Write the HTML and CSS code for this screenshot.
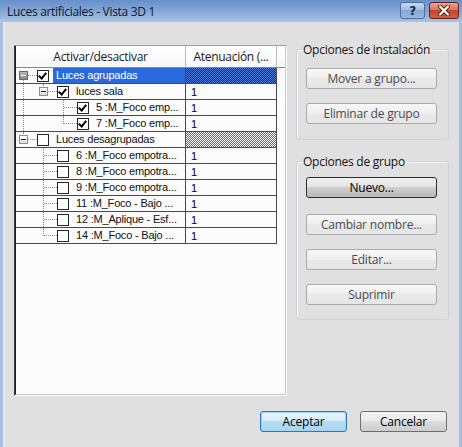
FILE: index.html
```html
<!DOCTYPE html>
<html lang="es">
<head>
    <meta charset="UTF-8">
    <title>Luces artificiales - Vista 3D 1</title>
    <link rel="stylesheet" href="styles.css">
</head>
<body>
    <div class="titlebar">
        <span class="title">Luces artificiales - Vista 3D 1</span>
        <div class="caption-btns">
            <span class="cap-btn help">?</span>
            <span class="cap-btn close">
                <svg width="14" height="11" viewBox="0 0 14 11">
                    <path d="M3 1.5 L11 9.5 M11 1.5 L3 9.5" stroke="#5a1a10" stroke-width="4" stroke-linecap="round"/>
                    <path d="M3 1.5 L11 9.5 M11 1.5 L3 9.5" stroke="#fff" stroke-width="2.2" stroke-linecap="round"/>
                </svg>
            </span>
        </div>
    </div>

    <div class="client">
        <div class="content">
            <div class="tree-grid">
                <div class="grid-inner">
                    <div class="grid-head">
                        <div class="hcell c1">Activar/desactivar</div>
                        <div class="hcell c2">Atenuación (...</div>
                    </div>

                    <!-- grupo: Luces agrupadas -->
                    <div class="grid-row">
                        <div class="cell c1">
                            <span class="node first parent"><span class="exp hot"></span></span>
                            <span class="cb on"></span>
                            <span class="label selected">Luces agrupadas</span>
                        </div>
                        <div class="cell c2 hatch-blue"></div>
                    </div>
                    <div class="grid-row">
                        <div class="cell c1">
                            <span class="indent pipe"></span>
                            <span class="node last parent"><span class="exp"></span></span>
                            <span class="cb on"></span>
                            <span class="label">luces sala</span>
                        </div>
                        <div class="cell c2">1</div>
                    </div>
                    <div class="grid-row">
                        <div class="cell c1">
                            <span class="indent pipe"></span>
                            <span class="indent"></span>
                            <span class="node"></span>
                            <span class="cb on"></span>
                            <span class="label">5 :M_Foco emp...</span>
                        </div>
                        <div class="cell c2">1</div>
                    </div>
                    <div class="grid-row">
                        <div class="cell c1">
                            <span class="indent pipe"></span>
                            <span class="indent"></span>
                            <span class="node last"></span>
                            <span class="cb on"></span>
                            <span class="label">7 :M_Foco emp...</span>
                        </div>
                        <div class="cell c2">1</div>
                    </div>

                    <!-- grupo: Luces desagrupadas -->
                    <div class="grid-row">
                        <div class="cell c1">
                            <span class="node last parent"><span class="exp"></span></span>
                            <span class="cb"></span>
                            <span class="label">Luces desagrupadas</span>
                        </div>
                        <div class="cell c2 hatch-gray"></div>
                    </div>
                    <div class="grid-row">
                        <div class="cell c1">
                            <span class="indent"></span>
                            <span class="node"></span>
                            <span class="cb"></span>
                            <span class="label">6 :M_Foco empotra...</span>
                        </div>
                        <div class="cell c2">1</div>
                    </div>
                    <div class="grid-row">
                        <div class="cell c1">
                            <span class="indent"></span>
                            <span class="node"></span>
                            <span class="cb"></span>
                            <span class="label">8 :M_Foco empotra...</span>
                        </div>
                        <div class="cell c2">1</div>
                    </div>
                    <div class="grid-row">
                        <div class="cell c1">
                            <span class="indent"></span>
                            <span class="node"></span>
                            <span class="cb"></span>
                            <span class="label">9 :M_Foco empotra...</span>
                        </div>
                        <div class="cell c2">1</div>
                    </div>
                    <div class="grid-row">
                        <div class="cell c1">
                            <span class="indent"></span>
                            <span class="node"></span>
                            <span class="cb"></span>
                            <span class="label">11 :M_Foco - Bajo ...</span>
                        </div>
                        <div class="cell c2">1</div>
                    </div>
                    <div class="grid-row">
                        <div class="cell c1">
                            <span class="indent"></span>
                            <span class="node"></span>
                            <span class="cb"></span>
                            <span class="label">12 :M_Aplique - Esf...</span>
                        </div>
                        <div class="cell c2">1</div>
                    </div>
                    <div class="grid-row">
                        <div class="cell c1">
                            <span class="indent"></span>
                            <span class="node last"></span>
                            <span class="cb"></span>
                            <span class="label">14 :M_Foco - Bajo ...</span>
                        </div>
                        <div class="cell c2">1</div>
                    </div>
                </div>
            </div>

            <div class="side">
                <fieldset class="group install">
                    <legend>Opciones de instalación</legend>
                    <button class="btn off">Mover a grupo...</button>
                    <button class="btn off">Eliminar de grupo</button>
                </fieldset>
                <fieldset class="group groups">
                    <legend>Opciones de grupo</legend>
                    <button class="btn focus">Nuevo...</button>
                    <button class="btn off">Cambiar nombre...</button>
                    <button class="btn off">Editar...</button>
                    <button class="btn off">Suprimir</button>
                </fieldset>
            </div>
        </div>

        <div class="footer">
            <button class="btn default">Aceptar</button>
            <button class="btn">Cancelar</button>
        </div>
    </div>
</body>
</html>
```

FILE: styles.css
```css
body {
    margin: 0;
    width: 462px;
    height: 447px;
    overflow: hidden;
    display: flex;
    flex-direction: column;
    background: #a4c0e2;
    font-family: 'Open Sans', 'Noto Sans', sans-serif;
    font-size: 12px;
    letter-spacing: -0.25px;
    color: #000;
}

/* caption bar */
.titlebar {
    height: 22px;
    flex: none;
    display: flex;
    align-items: center;
    justify-content: space-between;
    padding: 0 3px 0 7px;
    background: linear-gradient(#6690c8, #86a9d7 55%, #a9c5e6);
}

.title {
    color: #10182a;
    font-size: 12px;
    letter-spacing: -0.3px;
}

.caption-btns {
    display: flex;
    gap: 4px;
    align-self: flex-start;
    margin-top: 2px;
}

.cap-btn {
    height: 15px;
    display: flex;
    align-items: center;
    justify-content: center;
    border-radius: 3px;
}

.cap-btn.help {
    width: 23px;
    border: 1px solid #4d6f9c;
    background: linear-gradient(#c6d9ef, #9dbbe0 50%, #85a8d4 50%, #9ab8de);
    color: #15264a;
    font-family: 'DejaVu Sans', sans-serif;
    font-weight: bold;
    font-size: 12px;
}

.cap-btn.close {
    width: 28px;
    border: 1px solid #6e2216;
    background: linear-gradient(#e8a597, #d5705d 50%, #c2442e 50%, #d0604a);
}

/* window body */
.client {
    flex: 1;
    margin: 0 3px;
    padding: 23px 10px 0 11px;
    background: #e0e0e0;
    box-shadow: inset 1px 0 #e9e4de, inset 3px 0 #e6e2dd;
}

.content {
    display: flex;
    gap: 9px;
    align-items: flex-start;
}

/* tree grid */
.tree-grid {
    width: 273px;
    height: 351px;
    box-sizing: border-box;
    border: 1px solid;
    border-color: #a0a0a0 #ffffff #ffffff #3a3a3a;
    background: #fbfbfb;
}

.grid-inner {
    height: 100%;
    box-sizing: border-box;
    border: 1px solid;
    border-color: #ffffff #c8c8c8 #c8c8c8 #1e1e1e;
    border-top: 0;
    font-family: 'Liberation Sans', Arial, sans-serif;
    font-size: 11px;
    letter-spacing: -0.2px;
}

.grid-head {
    display: flex;
    height: 21px;
    border-bottom: 1px solid #8a8a8a;
    background: linear-gradient(#ffffff, #f6f7f9);
    font-family: 'Open Sans', sans-serif;
    font-size: 12px;
    letter-spacing: -0.3px;
}

.hcell {
    display: flex;
    align-items: center;
    justify-content: center;
    border-right: 1px solid #b8b8b8;
    color: #1a1a1a;
}

.c1 {
    width: 169px;
}

.c2 {
    width: 90px;
}

.grid-row {
    display: flex;
    height: 16px;
}

.cell {
    box-sizing: border-box;
    height: 16px;
    border-bottom: 1px solid #4a4a4a;
    border-right: 1px solid #4a4a4a;
    display: flex;
    align-items: center;
}

.cell.c1 {
    width: 170px;
}

.cell.c2 {
    width: 91px;
    padding-left: 5px;
}

.hatch-blue {
    background: repeating-conic-gradient(#0f2f7e 0 25%, #4c7cdb 0 50%) 0 0 / 2px 2px;
}

.hatch-gray {
    background: repeating-conic-gradient(#6e6e6e 0 25%, #f4f4f4 0 50%) 0 0 / 2px 2px;
}

/* tree connectors */
.indent,
.node {
    position: relative;
    width: 20px;
    height: 100%;
    flex: none;
}

.indent.pipe::before,
.node::before {
    content: "";
    position: absolute;
    left: 7px;
    top: 0;
    bottom: 0;
    border-left: 1px dotted #8c8c8c;
}

.node.first::before {
    top: 50%;
}

.node.last::before {
    bottom: 50%;
}

.node::after {
    content: "";
    position: absolute;
    left: 8px;
    right: -1px;
    top: 7px;
    border-top: 1px dotted #8c8c8c;
}

.exp {
    position: absolute;
    z-index: 1;
    left: 3px;
    top: 3px;
    width: 7px;
    height: 7px;
    border: 1px solid #8e8f8f;
    background: linear-gradient(#ffffff, #dcdcdc);
}

.exp::after {
    content: "";
    position: absolute;
    left: 1px;
    top: 3px;
    width: 5px;
    height: 1px;
    background: #222;
}

.exp.hot {
    background: linear-gradient(#b8b8b8, #8a8a8a);
    border-color: #6c6c6c;
}

.exp.hot::after {
    background: #fff;
}

/* check boxes */
.cb {
    position: relative;
    flex: none;
    width: 10px;
    height: 10px;
    margin-left: 1px;
    border: 1px solid #262626;
    background: #fff;
}

.cb.on::after {
    content: "";
    position: absolute;
    left: 2px;
    top: 0;
    width: 3px;
    height: 6px;
    border-right: 2px solid #000;
    border-bottom: 2px solid #000;
    transform: rotate(40deg);
}

.label {
    margin-left: 4px;
    padding-left: 3px;
    line-height: 15px;
    white-space: nowrap;
    color: #111;
}

.label.selected {
    flex: 1;
    align-self: stretch;
    background: #2a69dc;
    color: #fff;
}

/* option groups */
.side {
    width: 153px;
    display: flex;
    flex-direction: column;
    gap: 14px;
    margin-top: -3px;
}

.group {
    margin: 0;
    min-width: 0;
    padding: 11px 11px 15px 9px;
    border: 1px solid #cdd3d8;
    border-radius: 3px;
    box-shadow: inset 1px 1px 0 #f6f6f6;
    display: flex;
    flex-direction: column;
    gap: 14px;
}

.group.groups {
    padding-top: 8px;
    padding-bottom: 14px;
}

.group legend {
    margin-left: -5px;
    padding: 0 2px;
    line-height: 15px;
    white-space: nowrap;
    color: #111;
}

.group .focus {
    margin-bottom: 2px;
}

/* push buttons */
.btn {
    height: 21px;
    width: 131px;
    padding: 0;
    font: inherit;
    letter-spacing: -0.2px;
    color: #000;
    border: 1px solid #6f6f6f;
    border-radius: 3px;
    background: linear-gradient(#f3f3f3, #ebebeb 45%, #dcdcdc 50%, #cdcdcd);
}

.btn.off {
    color: #4c4c4c;
    border-color: #a8abad;
    background: linear-gradient(#f7f7f7, #efefef 50%, #e8e8e8 50%, #e6e6e6);
}

.btn.focus {
    border-color: #2e2e2e;
    background: linear-gradient(#f1f1f1, #e4e4e4 45%, #cfcfcf 50%, #b9b9b9);
}

.footer {
    display: flex;
    justify-content: flex-end;
    gap: 13px;
    margin-top: 15px;
    padding-right: 2px;
}

.footer .btn {
    width: 87px;
}

.footer .default {
    border-color: #2f78b8;
    box-shadow: inset 0 0 0 1px #9cd4f5;
    background: linear-gradient(#e8f5fd, #d3ecfa 50%, #b6ddf4 50%, #a9d6f2);
}
```
